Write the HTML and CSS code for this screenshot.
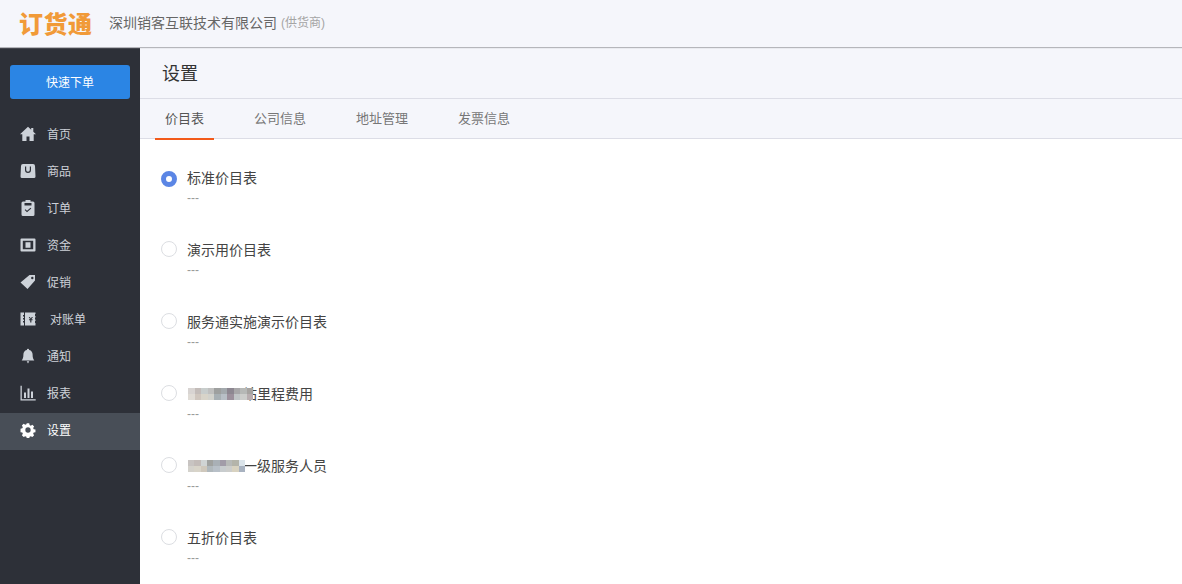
FILE: index.html
```html
<!DOCTYPE html>
<html lang="zh-CN">
<head>
<meta charset="utf-8">
<title>设置</title>
<link rel="stylesheet" href="styles.css">
</head>
<body>
<header class="topbar">
  <div class="logo">订货通</div>
  <div class="company">深圳销客互联技术有限公司</div>
  <div class="role">(供货商)</div>
</header>
<div class="main">
  <aside class="sidebar">
    <div class="quick-wrap"><button class="quick">快速下单</button></div>
    <nav class="nav">
      <a class="nav-item"><svg class="ico" viewBox="0 0 16 16"><path d="M8 .8 0 8.200h2.300V15h4.200v-4.500h3V15h4.200V8.200H16l-2.700-2.500V2h-2.100v1.800z"/></svg><span>首页</span></a>
      <a class="nav-item"><svg class="ico" viewBox="0 0 16 16"><path fill-rule="evenodd" d="M3 1h10a2 2 0 0 1 2 2l.5 10.500a1.500 1.500 0 0 1-1.500 1.500H2a1.500 1.500 0 0 1-1.500-1.500L1 3a2 2 0 0 1 2-2zm2 2.500V7a3 3 0 0 0 6 0V3.500h-1.200V7a1.800 1.800 0 0 1-3.600 0V3.500z"/></svg><span>商品</span></a>
      <a class="nav-item"><svg class="ico" viewBox="0 0 16 16"><path fill-rule="evenodd" d="M5.500 0h5v1.500h2.500A1.500 1.500 0 0 1 14.500 3v11.500A1.500 1.500 0 0 1 13 16H3a1.500 1.500 0 0 1-1.500-1.500V3A1.500 1.500 0 0 1 3 1.500h2.500zM4.500 3v2.500h7V3zm1 6.300-.8.800L7 12.300l4.300-3.800-.8-.8L7 10.700z"/></svg><span>订单</span></a>
      <a class="nav-item"><svg class="ico" viewBox="0 0 16 16"><path fill-rule="evenodd" d="M1.500 1.500h13a1 1 0 0 1 1 1v11a1 1 0 0 1-1 1h-13a1 1 0 0 1-1-1v-11a1 1 0 0 1 1-1zm1.300 2.200v8.600h10.400V3.700zM5.500 5.300h5v5.400h-5z"/></svg><span>资金</span></a>
      <a class="nav-item"><svg class="ico" viewBox="0 0 16 16"><path fill-rule="evenodd" d="M9.500 1H15v5.500L7.500 15 0.500 8.500zM12.300 2.800a1.200 1.200 0 1 0 0 2.400 1.200 1.200 0 0 0 0-2.400z"/></svg><span>促销</span></a>
      <a class="nav-item nav-item-wide"><svg class="ico" viewBox="0 0 16 16"><path fill-rule="evenodd" d="M.5 1.500h3.500V4H3v1.500h1V7H3v1.500h1V10H3v1.500h1v3H.5zM5 1.500h10.500V3H15v2h.5v1.500H15v2h.5V10H15v2h.5v2.500H5zM8.700 6l1.500 2.200h-1.200v1h1.200v2.300h1.200V9.200h1.200v-1h-1.200L13 6h-1.200l-1 1.500-1-1.500z"/></svg><span>对账单</span></a>
      <a class="nav-item"><svg class="ico" viewBox="0 0 16 16"><path d="M8 .8c.7 0 1.100.4 1.200 1.100 2.300.5 3.400 2.400 3.400 4.700 0 2.800.5 4.300 1.700 5.900H1.700c1.200-1.600 1.700-3.100 1.700-5.900 0-2.300 1.100-4.200 3.400-4.700C6.900 1.200 7.300.8 8 .8zM6.700 13.300h2.600L8 15.500z"/></svg><span>通知</span></a>
      <a class="nav-item"><svg class="ico" viewBox="0 0 16 16"><path d="M.5 .8h1.300v13.400h13.900v1.300H.5zM4 7.500h2v5.500H4zM7.500 3.500h2V13h-2zM11 6.500h2V13h-2z"/></svg><span>报表</span></a>
      <a class="nav-item active"><svg class="ico" viewBox="-1 -1 18 18"><path fill-rule="evenodd" d="M6.600.5h2.800l.4 2 1.300.6 1.800-1.100 2 2-1.100 1.800.6 1.300 2 .4v3l-2 .4-.6 1.300 1.100 1.800-2 2-1.800-1.100-1.300.6-.4 2H6.600l-.4-2-1.300-.6-1.800 1.100-2-2 1.100-1.800-.6-1.300-2-.4V6.500l2-.4.6-1.300L1.100 3l2-2 1.800 1.100 1.300-.6zM8 5a3 3 0 1 0 0 6 3 3 0 0 0 0-6z"/></svg><span>设置</span></a>
    </nav>
  </aside>
  <main class="content">
    <div class="page-head">设置</div>
    <div class="tabs">
      <a class="tab current">价目表</a>
      <a class="tab">公司信息</a>
      <a class="tab">地址管理</a>
      <a class="tab">发票信息</a>
    </div>
    <ul class="prices">
      <li class="price"><i class="radio on"></i><div><div class="name">标准价目表</div><div class="desc">---</div></div></li>
      <li class="price"><i class="radio"></i><div><div class="name">演示用价目表</div><div class="desc">---</div></div></li>
      <li class="price"><i class="radio"></i><div><div class="name">服务通实施演示价目表</div><div class="desc">---</div></div></li>
      <li class="price"><i class="radio"></i><div><div class="name"><span class="masked"></span>站里程费用
        <svg class="mosaic mosaic-a" viewBox="0 0 10 2" preserveAspectRatio="none" shape-rendering="crispEdges">
          <rect width="1" height="1" fill="#d8d4d2"/><rect x="1" width="1" height="1" fill="#c3bcb9"/><rect x="2" width="1" height="1" fill="#c8cdcc"/><rect x="3" width="1" height="1" fill="#c0c0bf"/><rect x="4" width="1" height="1" fill="#9ea09f"/><rect x="5" width="1" height="1" fill="#a3a9ad"/><rect x="6" width="1" height="1" fill="#8d8791"/><rect x="7" width="1" height="1" fill="#a8a7a9"/><rect x="8" width="1" height="1" fill="#b6b8b6"/><rect x="9" width="1" height="1" fill="#a6a3a0"/>
          <rect y="1" width="1" height="1" fill="#e0dcd6"/><rect x="1" y="1" width="1" height="1" fill="#cfc6be"/><rect x="2" y="1" width="1" height="1" fill="#d8d4c9"/><rect x="3" y="1" width="1" height="1" fill="#d2d2cc"/><rect x="4" y="1" width="1" height="1" fill="#a8b0b4"/><rect x="5" y="1" width="1" height="1" fill="#b8bfc6"/><rect x="6" y="1" width="1" height="1" fill="#9c909c"/><rect x="7" y="1" width="1" height="1" fill="#c0c4c6"/><rect x="8" y="1" width="1" height="1" fill="#cccdcb"/><rect x="9" y="1" width="1" height="1" fill="#b8aeb0"/>
        </svg></div><div class="desc">---</div></div></li>
      <li class="price"><i class="radio"></i><div><div class="name"><span class="masked"></span>一级服务人员
        <svg class="mosaic mosaic-b" viewBox="0 0 9 2" preserveAspectRatio="none" shape-rendering="crispEdges">
          <rect width="1" height="1" fill="#c8c4c2"/><rect x="1" width="1" height="1" fill="#c3bcb9"/><rect x="2" width="1" height="1" fill="#d0d4d4"/><rect x="3" width="1" height="1" fill="#a0a2a0"/><rect x="4" width="1" height="1" fill="#a9b0b6"/><rect x="5" width="1" height="1" fill="#a29ca8"/><rect x="6" width="1" height="1" fill="#b8bab8"/><rect x="7" width="1" height="1" fill="#b4b4aa"/><rect x="8" width="1" height="1" fill="#dbe4ea"/>
          <rect y="1" width="1" height="1" fill="#d4d2cc"/><rect x="1" y="1" width="1" height="1" fill="#d8d4c9"/><rect x="2" y="1" width="1" height="1" fill="#cfc8bc"/><rect x="3" y="1" width="1" height="1" fill="#b0b8bc"/><rect x="4" y="1" width="1" height="1" fill="#b8c0c8"/><rect x="5" y="1" width="1" height="1" fill="#c8ccce"/><rect x="6" y="1" width="1" height="1" fill="#cccdcb"/><rect x="7" y="1" width="1" height="1" fill="#d8d2c0"/><rect x="8" y="1" width="1" height="1" fill="#a8b2c0"/>
        </svg></div><div class="desc">---</div></div></li>
      <li class="price"><i class="radio"></i><div><div class="name">五折价目表</div><div class="desc">---</div></div></li>
    </ul>
  </main>
</div>
</body>
</html>
```
FILE: styles.css
```css
* { box-sizing: border-box; }
html, body { margin: 0; height: 100%; overflow: hidden; }
body {
  font-family: "Liberation Sans", "Noto Sans CJK SC", sans-serif;
  color: #333;
  background: #fff;
  display: flex;
  flex-direction: column;
}
.topbar {
  height: 47px;
  flex: none;
  display: flex;
  align-items: center;
  padding-bottom: 4px;
  background: #f5f6fb;
  box-shadow: 0 1px 1px #b5b6bb;
  position: relative;
  z-index: 2;
}
.logo {
  margin-left: 19px;
  width: 90px;
  padding-top: 2px;
  font: 900 24px/1 "Noto Sans CJK SC", sans-serif;
  letter-spacing: 0.5px;
  color: #f19a38;
}
.company { font-size: 14px; color: #666; }
.role { font-size: 12px; color: #a5a5a5; margin-left: 4px; }
.main { flex: 1; display: flex; min-height: 0; }
.sidebar { width: 140px; flex: none; background: #2d3038; }
.quick-wrap { padding: 18px 10px; }
.quick {
  display: block;
  width: 120px;
  height: 34px;
  padding: 0 0 2px;
  border: 0;
  border-radius: 3px;
  background: #2b85e4;
  color: #fff;
  font: 12px "Liberation Sans", "Noto Sans CJK SC", sans-serif;
}
.nav { display: flex; flex-direction: column; }
.nav-item {
  height: 37px;
  display: flex;
  align-items: center;
  padding: 0 0 3px 20px;
  gap: 11px;
  font-size: 12px;
  color: #cdd2d9;
}
.nav-item span { margin-bottom: 2px; }
.nav-item-wide { gap: 14px; }
.ico { width: 16px; height: 16px; fill: #cdd2d9; flex: none; }
.nav-item.active { background: #484e57; color: #fff; }
.active .ico { fill: #fff; }
.content { flex: 1; min-width: 0; }
.page-head {
  height: 52px;
  padding: 0 0 1px 22px;
  display: flex;
  align-items: center;
  font-size: 18px;
  color: #333;
  background: #f5f6fb;
  border-bottom: 1px solid #dcdde6;
}
.tabs {
  height: 40px;
  display: flex;
  gap: 30px;
  padding-left: 15px;
  background: #f5f6fb;
  border-bottom: 1px solid #dcdde6;
}
.tab {
  height: 41px;
  padding: 0 10px 2px;
  display: flex;
  align-items: center;
  font-size: 13px;
  color: #777;
  border-bottom: 2px solid transparent;
}
.tab.current { color: #555; border-bottom-color: #f25a1a; }
.prices { list-style: none; margin: 0; padding: 29px 0 0 21px; }
.price { height: 72px; display: flex; gap: 10px; }
.radio {
  width: 16px;
  height: 16px;
  margin-top: 1px;
  border: 1px solid #dcdee2;
  border-radius: 50%;
  background: #fff;
  flex: none;
}
.radio.on { margin-top: 3px; border: 5px solid #5b86e5; }
.name {
  position: relative;
  display: flex;
  align-items: center;
  height: 20px;
  font-size: 14px;
  line-height: 20px;
  color: #444;
  white-space: nowrap;
}
.desc { font-size: 12px; line-height: 20px; color: #999; }
.masked { display: inline-block; width: 56px; }
.mosaic { position: absolute; top: 4px; left: 1px; height: 12px; }
.mosaic-a { width: 65px; }
.mosaic-b { width: 57px; }
```
